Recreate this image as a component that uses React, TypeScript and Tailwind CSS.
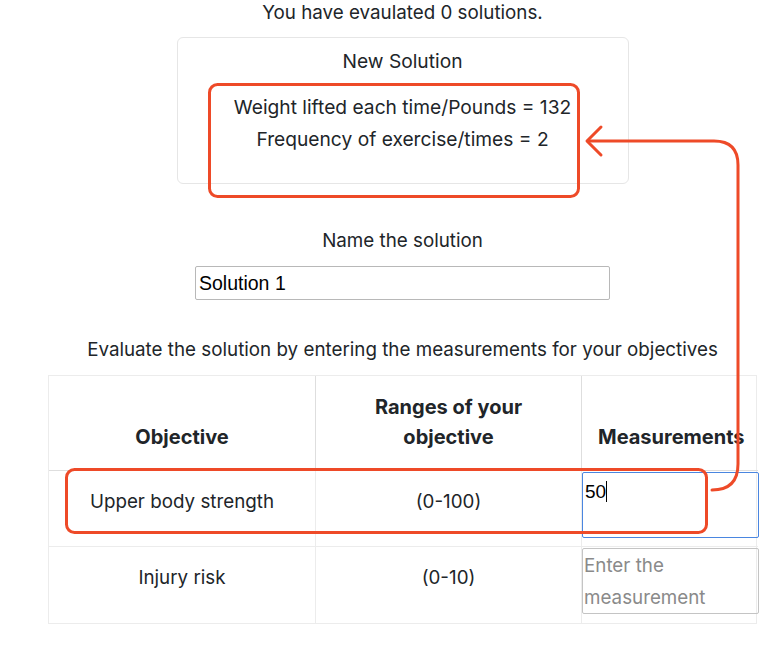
import React from 'react';

const rows = [
  { name: 'Upper body strength', range: '(0-100)', value: '50' },
  { name: 'Injury risk', range: '(0-10)', value: '' },
];

const App: React.FC = () => {
  return (
    <div className="relative h-[661px] w-[781px] bg-white text-[#212529] font-['Inter',sans-serif] text-[18.8px]">
      <div className="ml-[48px] w-[709px] flex flex-col items-center">
        <p className="h-[27px] leading-[26px]">You have evaulated 0 solutions.</p>
        <div className="mt-[10px] h-[147px] w-[452px] rounded-md border border-[#e6e6e6] flex flex-col items-center pt-[10px] text-[19.2px]">
          <p className="leading-[27px]">New Solution</p>
          <div className="mt-[16px] flex flex-col items-center leading-[32px]">
            <p>Weight lifted each time/Pounds = 132</p>
            <p>Frequency of exercise/times = 2</p>
          </div>
        </div>
        <p className="mt-[43px] leading-[27px]">Name the solution</p>
        <input
          readOnly
          value="Solution 1"
          className="mt-[12px] h-[34px] w-[415px] border border-[#b8b8b8] rounded-[2px] px-[3px] font-['Liberation_Sans',sans-serif] text-[19.5px] text-black outline-none"
        />
        <p className="mt-[36px] leading-[27px]">Evaluate the solution by entering the measurements for your objectives</p>

        <div className="mt-[12px] w-[709px] grid grid-cols-[266px_266px_177px] border-l border-r border-t border-b border-[#ececec]">
          <div className="h-[95px] border-b border-[#dedede] flex items-end justify-center pb-[18px] font-bold text-[20px]">Objective</div>
          <div className="h-[95px] border-b border-l border-[#dedede] flex items-end justify-center pb-[18px] font-bold text-[20px] text-center leading-[30px]">
            Ranges of your
            <br />
            objective
          </div>
          <div className="h-[95px] border-b border-l border-[#dedede] flex items-end pl-[16px] pb-[18px] font-bold text-[20px] whitespace-nowrap overflow-hidden">
            Measurements
          </div>
          {rows.map((r, i) => (
            <React.Fragment key={r.name}>
              <div className={`h-[76px] flex justify-center pt-[17px] leading-[28px] ${i === 0 ? 'border-b border-[#ececec]' : ''}`}>{r.name}</div>
              <div className={`h-[76px] flex justify-center pt-[17px] leading-[28px] border-l border-[#ececec] ${i === 0 ? 'border-b' : ''}`}>{r.range}</div>
              <div className={`h-[76px] border-l border-[#ececec] ${i === 0 ? 'border-b' : ''} pt-[1px]`}>
                {i === 0 ? (
                  <div className="h-[66px] w-[177px] border border-[#4a86e0] rounded-[2px] px-[2px] pt-[8px] font-['Liberation_Sans',sans-serif] text-[19px] text-black leading-[22px]">
                    50<span className="inline-block w-[1px] h-[21px] bg-black align-[-4px]" />
                  </div>
                ) : (
                  <div className="h-[66px] w-[177px] border border-[#c4c4c4] rounded-[2px] px-[1px] pt-[1px] text-[18.8px] text-[#8a8a8a] leading-[32px]">
                    Enter the
                    <br />
                    measurement
                  </div>
                )}
              </div>
            </React.Fragment>
          ))}
        </div>
      </div>

      {/* annotation overlay */}
      <svg className="absolute left-0 top-0 pointer-events-none" width="781" height="661" viewBox="0 0 781 661" fill="none">
        <rect x="209.5" y="84.5" width="369" height="112" rx="8" stroke="#ee4a28" strokeWidth="3" />
        <rect x="66.5" y="469.5" width="640" height="63" rx="8" stroke="#ee4a28" strokeWidth="3" />
        <path
          d="M712 490 Q738 490 738 464 L738 165 Q738 141 714 141 L588 141"
          stroke="#ee4a28"
          strokeWidth="3"
          strokeLinecap="round"
        />
        <path d="M601 127 L587 141 L601 155" stroke="#ee4a28" strokeWidth="3" strokeLinecap="round" strokeLinejoin="round" />
      </svg>
    </div>
  );
};

export default App;
